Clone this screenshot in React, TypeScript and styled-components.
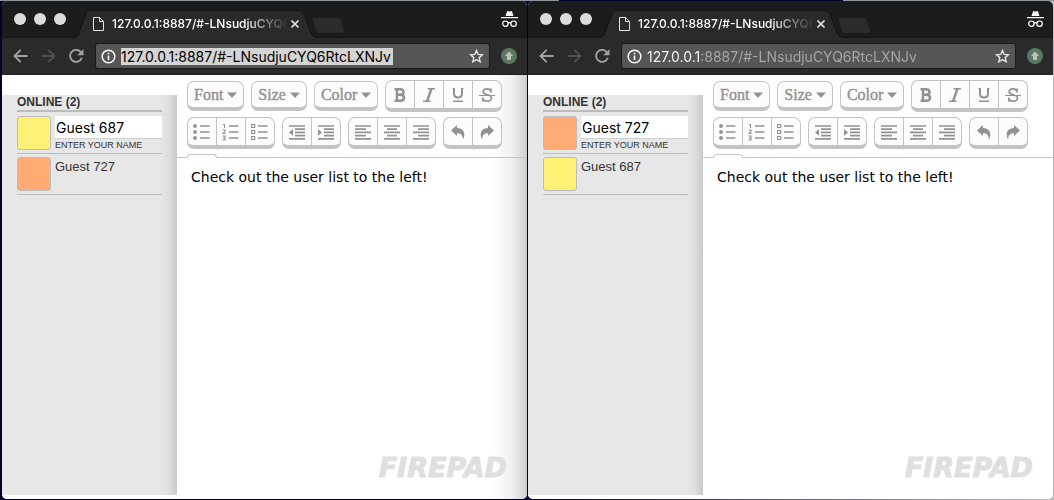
import React from "react";
import styled, { createGlobalStyle, css } from "styled-components";

const GlobalStyle = createGlobalStyle`
  *, *::before, *::after { box-sizing: border-box; }
  body {
    margin: 0;
    background: linear-gradient(to right, #00002e 0 50%, #b9bec2 99%);
    font-family: "Liberation Sans", Arial, sans-serif;
  }
  button, input { margin: 0; padding: 0; border: 0; font: inherit; }
`;

const Desktop = styled.main`
  display: grid;
  grid-template-columns: 1fr 1fr;
  gap: 1px;
  min-height: 100vh;
  padding: 1px 1px 1px 2px;
  background: linear-gradient(to right, #8c969b 0 53%, #00002e 53% 80%, #8c969b 80%) top / 100% 1px no-repeat;
`;

const BrowserWindow = styled.section`
  display: flex;
  flex-direction: column;
  min-width: 0;
  overflow: hidden;
  border-radius: 5px;
  background: #fff;
`;

const TabStrip = styled.header`
  display: flex;
  align-items: flex-end;
  height: 37px;
  background: #1c1c1c;
  border-bottom: 1px solid #141414;
`;

const WindowControls = styled.div`
  display: flex;
  align-self: center;
  gap: 8px;
  width: 72px;
  padding-left: 12px;
`;

const ControlDot = styled.button`
  width: 12px;
  height: 12px;
  border-radius: 50%;
  background: #dcdcdc;
`;

const Tab = styled.div`
  position: relative;
  display: flex;
  align-items: center;
  width: 243px;
  height: 28px;
  margin-bottom: -1px;
  padding: 0 16px 0 19px;
  color: #fff;
`;

const TabShape = styled.svg`
  position: absolute;
  inset: 0;
`;

const PageIcon = styled.svg`
  position: relative;
  flex: none;
  margin-right: 8px;
`;

const TabTitle = styled.span`
  position: relative;
  width: 177px;
  overflow: hidden;
  white-space: nowrap;
  font: 500 12px/16px Inter, sans-serif;
  mask-image: linear-gradient(to right, #000 132px, transparent 176px);
`;

const TabClose = styled.button`
  position: relative;
  display: flex;
  align-items: center;
  justify-content: center;
  width: 12px;
  height: 16px;
  background: none;
`;

const NewTab = styled.button`
  display: flex;
  margin-bottom: 4px;
  margin-left: -5px;
  background: none;
`;

const Incognito = styled.svg`
  align-self: center;
  margin: 0 9px 0 auto;
`;

const NavBar = styled.nav`
  display: flex;
  align-items: center;
  height: 37px;
  padding: 0 10px;
  background: #2a2a2a;
  border-bottom: 1px solid #202020;
`;

const NavButton = styled.button`
  display: flex;
  justify-content: center;
  flex: none;
  width: 16px;
  margin-right: 12px;
  background: none;

  &:nth-of-type(3) {
    margin-right: 11px;
  }
`;

const AddressBox = styled.form`
  display: flex;
  align-items: center;
  flex: 1;
  min-width: 0;
  height: 26px;
  margin-right: 11px;
  padding: 0 5px;
  border: 1px solid #191919;
  border-radius: 3px;
  background: #565656;
`;

const AddressInput = styled.input<{ $selected: boolean }>`
  width: 272px;
  height: 17px;
  margin: 0 auto 0 5px;
  outline: 0;
  font: 400 14px/17px Inter, sans-serif;
  ${({ $selected }) =>
    $selected
      ? css`
          background: #d4d4d4;
          color: #000;
        `
      : css`
          background: linear-gradient(to right, #fff 54px, #a8a8a8 54px);
          background-clip: text;
          -webkit-background-clip: text;
          color: transparent;
        `}
`;

const IconButton = styled.button`
  display: flex;
  flex: none;
  background: none;
`;

const Page = styled.div<{ $shaded: boolean }>`
  display: flex;
  flex: 1;
  background: ${({ $shaded }) =>
    $shaded
      ? "linear-gradient(to left, #d0d0d0, #efefef 14px, #fff 34px)"
      : "#fff"};
`;

const UserList = styled.aside`
  width: 175px;
  margin: 20px 0 4px;
  padding: 0 15px;
  background: linear-gradient(to left, #c9c9c9, #dedede 8px, #e7e7e7 17px);
  color: #333;
`;

const UserHeading = styled.h2`
  margin: 0 0 1px;
  height: 17px;
  border-bottom: 2px solid #bcbcbc;
  font-size: 12px;
  line-height: 15px;
`;

const UserRow = styled.div`
  display: flex;
  gap: 4px;
  height: 41px;
  padding-top: 3px;
  border-bottom: 1px solid #bcbcbc;
`;

const Swatch = styled.span<{ $color: string }>`
  flex: none;
  width: 34px;
  height: 34px;
  border: 1px solid #bcbcbc;
  border-radius: 3px;
  background: ${({ $color }) => $color};
`;

const NameField = styled.label`
  display: flex;
  flex-direction: column;
  flex: 1;
  min-width: 0;
  font-size: 9px;
  line-height: 12px;
`;

const NameInput = styled.input`
  width: 100%;
  height: 23px;
  padding: 1px;
  border-bottom: 1px solid #cfcfcf;
  background: #fff;
  color: #000;
  font: 400 14px/20px Inter, sans-serif;
`;

const UserName = styled.span`
  font-size: 13px;
  line-height: 19px;
`;

const Editor = styled.article`
  display: flex;
  flex-direction: column;
  flex: 1;
  min-width: 0;
`;

const FormatBar = styled.div`
  display: flex;
  flex-direction: column;
  gap: 5px;
  height: 83px;
  padding: 5px 10px 0;
  border-bottom: 1px solid #c4c4c4;
`;

const FormatRow = styled.div`
  display: flex;
  align-items: center;
  gap: 7px;
`;

const keyFrame = css`
  border: 1px solid #c3c3c3;
  border-bottom-width: 4px;
  border-radius: 7px;
  background: #fcfcfc;
  color: #929292;
`;

const MenuButton = styled.button`
  ${keyFrame}
  display: flex;
  align-items: center;
  gap: 4px;
  height: 30px;
  padding: 0 6px;
  font: 400 16px/20px "Liberation Serif", serif;
  -webkit-text-stroke: 0.4px #929292;
`;

const ButtonGroup = styled.div`
  ${keyFrame}
  display: flex;
  height: 32px;
`;

const FormatButton = styled.button`
  display: flex;
  align-items: center;
  justify-content: center;
  width: 29px;
  background: none;
  color: inherit;

  & + & {
    border-left: 1px solid #c3c3c3;
  }
  &:first-child {
    width: 28px;
  }
`;

const TabStub = styled.div`
  width: 30px;
  height: 4px;
  margin: auto 0 -1px;
  border: 1px solid #c4c4c4;
  border-bottom: 0;
  border-radius: 7px 7px 0 0;
  background: #fff;
`;

const DocumentText = styled.p`
  margin: 0;
  padding: 9px 14px;
  color: #000;
  font: 400 14px/20px "DejaVu Sans", Verdana, sans-serif;
`;

const Brand = styled.a`
  margin: auto 20px 15px auto;
  color: #dfdfdf;
  font: italic 700 27px/32px "DejaVu Sans", sans-serif;
  text-decoration: none;
  -webkit-text-stroke: 1px #dfdfdf;
`;

const ICONS: Record<string, React.ReactNode> = {
  bold: (
    <path
      d="M2.500 2.200H8c2.400 0 3.500 1 3.500 2.800S10.400 7.700 8 7.700H5.500M8 7.700c2.800 0 4 1 4 3s-1.200 3.100-4 3.100H2.500M5 2.200v11.600"
      strokeWidth="2.500"
    />
  ),
  italic: (
    <>
      <path d="M10.500 1.500 6 14.500" strokeWidth="2.400" />
      <path d="M6.500 1.700H14M2 14.300h7.500" strokeWidth="1.400" />
    </>
  ),
  underline: (
    <>
      <path d="M4 1v5.500c0 5.300 8 5.300 8 0V1" strokeWidth="2" />
      <path d="M2.500 1.500h2M11.500 1.500h2" strokeWidth="1" />
      <path d="M3 14.300h10" strokeWidth="1.600" />
    </>
  ),
  strike: (
    <>
      <path
        d="M12 5.500V1.500M12 5C11.500 .9 4.200.700 4.200 4.700 4.200 8.600 12.500 7 12.500 11c0 4.300-8 4-8.700.200M3.800 14.500v-4"
        strokeWidth="1.700"
      />
      <path d="M0 8.500h16" strokeWidth="1.200" />
    </>
  ),
  bullets: (
    <>
      <path d="M7 3h9.500M7 9h9.500M7 15h9.500" strokeWidth="1.500" />
      <g fill="currentColor" stroke="none">
        <circle cx="2" cy="3" r="1.900" />
        <circle cx="2" cy="9" r="1.900" />
        <circle cx="2" cy="15" r="1.900" />
      </g>
    </>
  ),
  numbers: (
    <>
      <path d="M7 3h9.500M7 9h9.500M7 15h9.500" strokeWidth="1.500" />
      <path
        d="M1 1.500h1.500V5M.500 7h2.500v1.700L.800 10.500H3.500M.500 13H3v4H.500M1 15h2"
        strokeWidth="1.100"
      />
    </>
  ),
  todo: (
    <>
      <path d="M7 3h9.500M7 9h9.500M7 15h9.500" strokeWidth="1.500" />
      <path d="M.700 1.500h3v3h-3zM.700 7.500h3v3h-3zM.700 13.500h3v3h-3z" strokeWidth="1.200" />
    </>
  ),
  outdent: (
    <>
      <path d="M0 2h16M6 5.200h10M6 8.400h10M6 11.600h10M0 14.800h16" strokeWidth="1.700" />
      <path d="m0 8.400 4-3.400v6.800z" fill="currentColor" stroke="none" />
    </>
  ),
  indent: (
    <>
      <path d="M0 2h16M6 5.200h10M6 8.400h10M6 11.600h10M0 14.800h16" strokeWidth="1.700" />
      <path d="M4 8.400 0 5v6.800z" fill="currentColor" stroke="none" />
    </>
  ),
  left: <path d="M0 2h16M0 5.200h11M0 8.400h16M0 11.600h11M0 14.800h16" strokeWidth="1.700" />,
  center: <path d="M0 2h16M3 5.200h10M0 8.400h16M3 11.600h10M0 14.800h16" strokeWidth="1.700" />,
  right: <path d="M0 2h16M5 5.200h11M0 8.400h16M5 11.600h11M0 14.800h16" strokeWidth="1.700" />,
  undo: (
    <path
      d="M1 6.500 7 1v3c6 .200 9.500 5 5.800 11.800C12.900 11 11 9.300 7 9.300V12z"
      fill="currentColor"
      stroke="none"
    />
  ),
  redo: (
    <path
      d="M15 6.500 9 1v3C3 4.200-.5 9 3.200 15.800 3.100 11 5 9.300 9 9.300V12z"
      fill="currentColor"
      stroke="none"
    />
  ),
};

const LIST_ICONS = ["bullets", "numbers", "todo"];

function Glyph({ name }: { name: string }) {
  const size = LIST_ICONS.includes(name) ? 18 : 16;
  return (
    <svg
      width={size}
      height={size}
      viewBox={`0 0 ${size} ${size}`}
      fill="none"
      stroke="currentColor"
      aria-hidden="true"
    >
      {ICONS[name]}
    </svg>
  );
}

function Group({ names }: { names: string[] }) {
  return (
    <ButtonGroup>
      {names.map((name) => (
        <FormatButton key={name} type="button" aria-label={name}>
          <Glyph name={name} />
        </FormatButton>
      ))}
    </ButtonGroup>
  );
}

function Menu({ label }: { label: string }) {
  return (
    <MenuButton type="button">
      {label}
      <svg width="10" height="6" viewBox="0 0 10 6" aria-hidden="true">
        <path d="M0 .500h10L5 6z" fill="currentColor" />
      </svg>
    </MenuButton>
  );
}

type User = { name: string; color: string };

type WindowProps = {
  me: User;
  other: User;
  focused?: boolean;
};

const URL_TEXT = "127.0.0.1:8887/#-LNsudjuCYQ6RtcLXNJv";

function Browser({ me, other, focused = false }: WindowProps) {
  return (
    <BrowserWindow>
      <TabStrip>
        <WindowControls>
          <ControlDot type="button" aria-label="Close window" />
          <ControlDot type="button" aria-label="Minimize window" />
          <ControlDot type="button" aria-label="Zoom window" />
        </WindowControls>
        <Tab>
          <TabShape width="243" height="28" viewBox="0 0 243 28" aria-hidden="true">
            <path
              d="M0 28c3-1 4-2 5-5l7-19c1-3 2-4 4-4h209c3 0 4 1 5 4l7 19c1 3 3 4 6 5z"
              fill="#2a2a2a"
            />
            <path
              d="M0 27.500c3-1 4-2 5-5l7-18c1-3 2-4 4-4h209c3 0 4 1 5 4l7 18c1 3 3 4 6 5"
              fill="none"
              stroke="#131313"
            />
          </TabShape>
          <PageIcon width="11" height="14" viewBox="0 0 11 14" fill="none" stroke="#e4e4e4" aria-hidden="true">
            <path d="M.500.500H6.500l4 4v9H.500zM6.500.500v4h4" />
          </PageIcon>
          <TabTitle>{URL_TEXT}</TabTitle>
          <TabClose type="button" aria-label="Close tab">
            <svg width="8" height="8" viewBox="0 0 8 8" stroke="#dedede" strokeWidth="1.600">
              <path d="m.500.500 7 7M7.500.500l-7 7" />
            </svg>
          </TabClose>
        </Tab>
        <NewTab type="button" aria-label="New tab">
          <svg width="32" height="15" viewBox="0 0 32 15">
            <path d="M2 0h24c2 0 2 1 3 3l3 9c0 2 0 3-2 3H7c-2 0-2-1-3-3L1 3C0 1 0 0 2 0z" fill="#2b2b2b" />
          </svg>
        </NewTab>
        <Incognito width="17" height="17" viewBox="0 0 17 17" fill="#fff" aria-label="Incognito">
          <path d="M4.500 5 6 .500c.200-.500.700-.500 1-.300.800.500 2.200.500 3 0 .300-.200.800-.200 1 .300L12.500 5zM0 6h17v1.300H0z" />
          <g fill="none" stroke="#fff" strokeWidth="1.200">
            <circle cx="4.400" cy="12.700" r="2.700" />
            <circle cx="12.600" cy="12.700" r="2.700" />
            <path d="M7 12.200c1-.700 2-.700 3 0" />
          </g>
        </Incognito>
      </TabStrip>
      <NavBar>
        <NavButton type="button" aria-label="Back">
          <svg width="15" height="14" viewBox="0 0 15 14" fill="none" stroke="#a2a2a2" strokeWidth="1.900">
            <path d="M14.500 7H2M7.700.800 1.500 7l6.200 6.200" />
          </svg>
        </NavButton>
        <NavButton type="button" aria-label="Forward">
          <svg width="15" height="14" viewBox="0 0 15 14" fill="none" stroke="#515151" strokeWidth="1.900">
            <path d="M.500 7H13M7.300.800 13.500 7l-6.200 6.200" />
          </svg>
        </NavButton>
        <NavButton type="button" aria-label="Reload">
          <svg width="15" height="14" viewBox="0 0 15 14" fill="none" stroke="#a2a2a2" strokeWidth="1.900">
            <path d="M12.800 8.800A6 6 0 1 1 11.500 2.800L13 4.300" />
            <path d="M14.500 0v6.300H8.200z" fill="#a2a2a2" stroke="none" />
          </svg>
        </NavButton>
        <AddressBox>
          <svg width="15" height="15" viewBox="0 0 15 15" fill="none" stroke="#fff" aria-hidden="true">
            <circle cx="7.500" cy="7.500" r="6.300" strokeWidth="1.500" />
            <path d="M7.500 6.500V11M7.500 3.700v1.600" strokeWidth="1.600" />
          </svg>
          <AddressInput aria-label="Address" defaultValue={URL_TEXT} $selected={focused} />
          <IconButton type="button" aria-label="Bookmark">
            <svg width="15" height="14" viewBox="0 0 15 14" fill="none" stroke="#e2e2e2" strokeWidth="1.400">
              <path d="m7.500 1.500 1.700 3.900 4.200.400-3.200 2.800 1 4.200-3.700-2.200-3.700 2.200 1-4.200-3.200-2.800 4.200-.400z" />
            </svg>
          </IconButton>
        </AddressBox>
        <IconButton type="button" aria-label="Update available">
          <svg width="16" height="16" viewBox="0 0 16 16">
            <circle cx="8" cy="8" r="8" fill="#58795f" />
            <path d="M8 3.500 12.200 8H10v4H6V8H3.800z" fill="#c0c0c0" />
          </svg>
        </IconButton>
      </NavBar>
      <Page $shaded={focused}>
        <UserList>
          <UserHeading>ONLINE (2)</UserHeading>
          <UserRow>
            <Swatch $color={me.color} />
            <NameField>
              <NameInput defaultValue={me.name} />
              ENTER YOUR NAME
            </NameField>
          </UserRow>
          <UserRow>
            <Swatch $color={other.color} />
            <UserName>{other.name}</UserName>
          </UserRow>
        </UserList>
        <Editor>
          <FormatBar>
            <FormatRow>
              <Menu label="Font" />
              <Menu label="Size" />
              <Menu label="Color" />
              <Group names={["bold", "italic", "underline", "strike"]} />
            </FormatRow>
            <FormatRow>
              <Group names={["bullets", "numbers", "todo"]} />
              <Group names={["outdent", "indent"]} />
              <Group names={["left", "center", "right"]} />
              <Group names={["undo", "redo"]} />
            </FormatRow>
            <TabStub />
          </FormatBar>
          <DocumentText>Check out the user list to the left!</DocumentText>
          <Brand href="#firepad">FIREPAD</Brand>
        </Editor>
      </Page>
    </BrowserWindow>
  );
}

const YELLOW: User = { name: "Guest 687", color: "#fff176" };
const ORANGE: User = { name: "Guest 727", color: "#ffab73" };

export default function App() {
  return (
    <>
      <GlobalStyle />
      <Desktop>
        <Browser me={YELLOW} other={ORANGE} focused />
        <Browser me={ORANGE} other={YELLOW} />
      </Desktop>
    </>
  );
}
